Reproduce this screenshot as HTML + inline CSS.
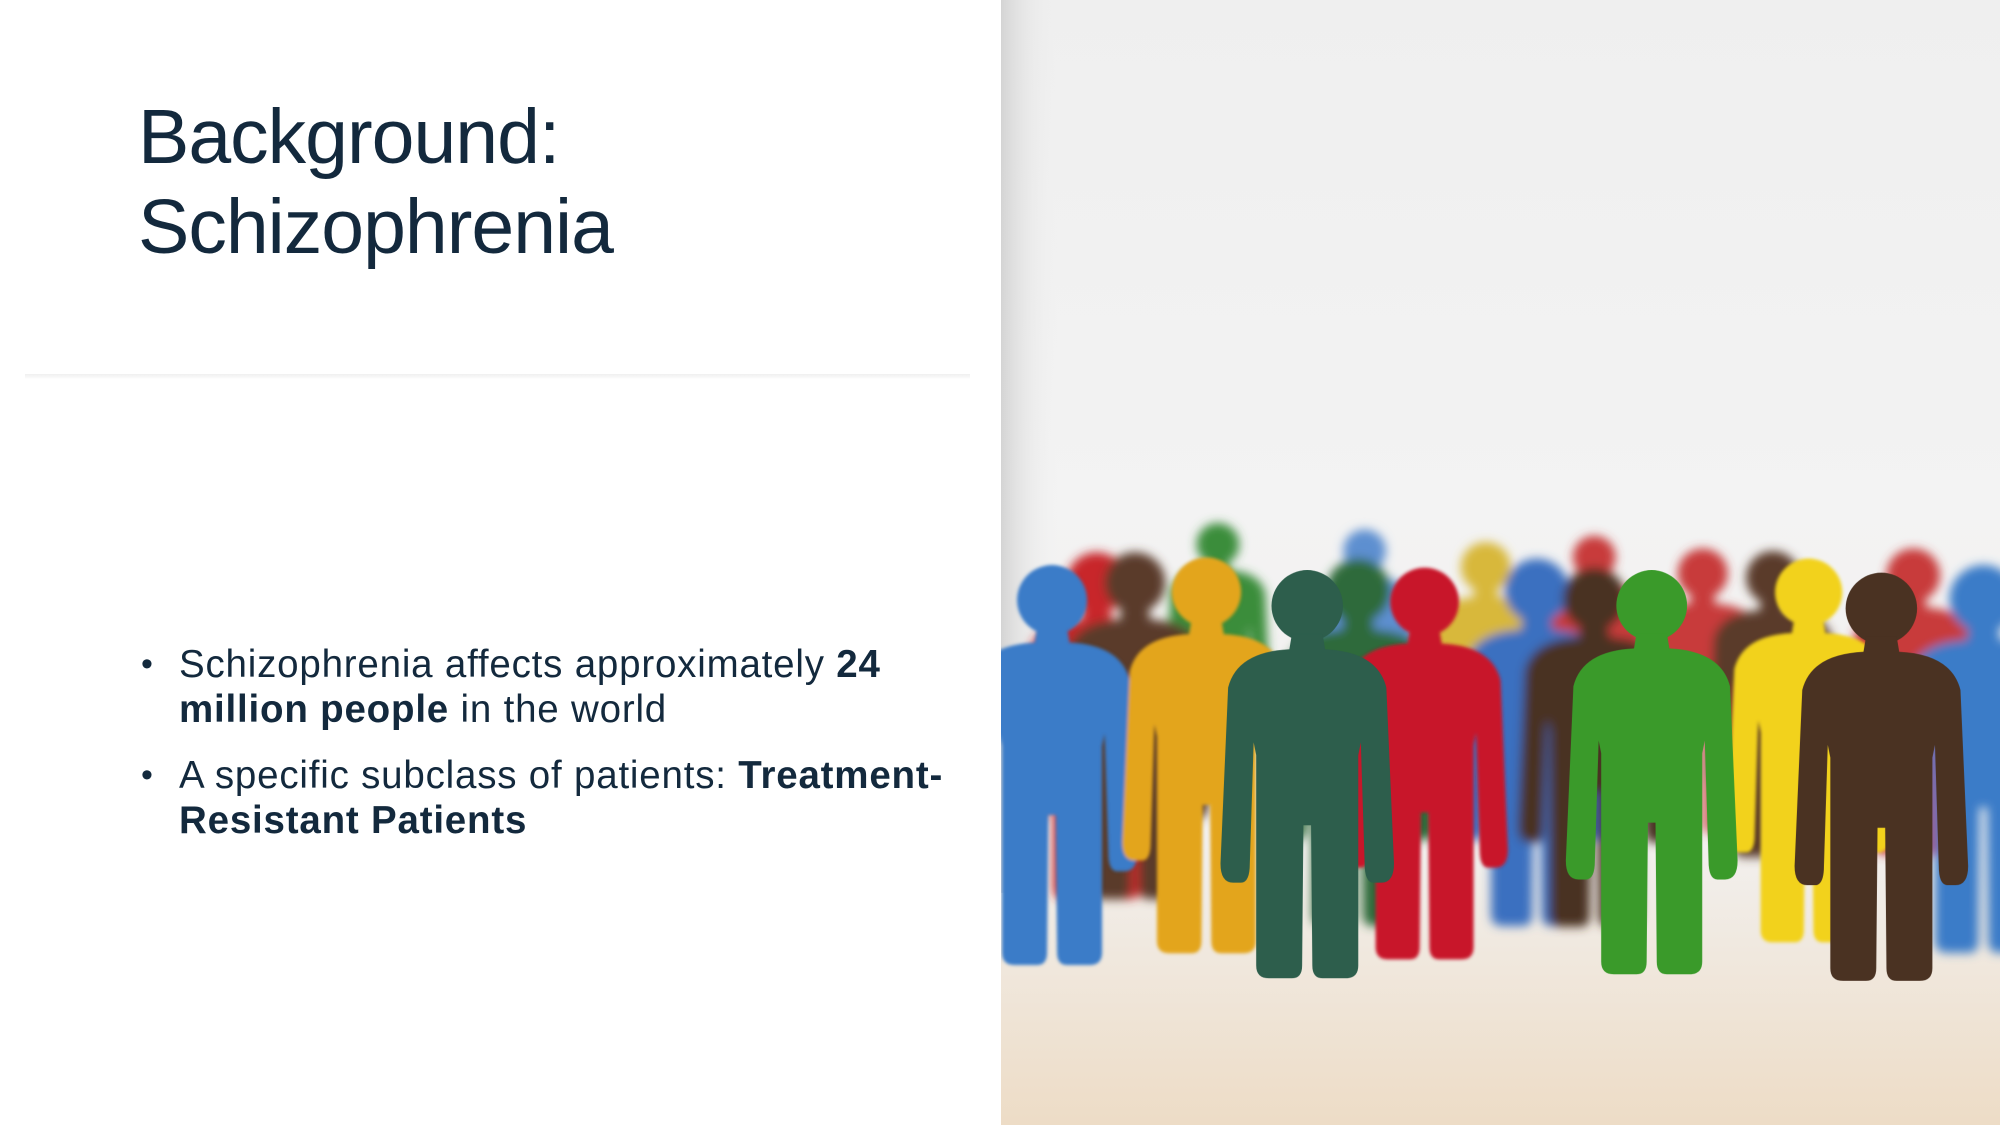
<!DOCTYPE html>
<html><head><meta charset="utf-8"><style>
html,body{margin:0;padding:0;}
body{width:2000px;height:1125px;position:relative;overflow:hidden;background:#fff;font-family:"Liberation Sans",sans-serif;color:#13293d;}
.title{position:absolute;left:138px;top:92px;font-size:77px;line-height:90px;letter-spacing:-1px;}
.rule{position:absolute;left:25px;top:374px;width:945px;height:5px;background:linear-gradient(to bottom,#f0f0f0,#f7f7f7 60%,#fff);}
.list{position:absolute;left:179px;top:642px;width:800px;font-size:38.5px;line-height:45px;letter-spacing:0.8px;}
.list div{position:relative;margin-bottom:21px;}
.list div:before{content:"•";position:absolute;left:-38px;top:0;font-size:34px;}
b{font-weight:bold;}
svg{position:absolute;left:1001px;top:0;}
</style></head><body>
<div class="title">Background:<br>Schizophrenia</div>
<div class="rule"></div>
<div class="list">
<div>Schizophrenia affects approximately <b>24 million people</b> in the world</div>
<div>A specific subclass of patients: <b>Treatment-Resistant Patients</b></div>
</div>
<svg width="999" height="1125" viewBox="785 0 783 882" preserveAspectRatio="none">
<defs>
<linearGradient id="bg" x1="0" y1="0" x2="0" y2="1">
<stop offset="0" stop-color="#efefef"/><stop offset="0.45" stop-color="#f3f3f3"/><stop offset="0.75" stop-color="#f2f0ee"/><stop offset="1" stop-color="#eddcc6"/></linearGradient>
<linearGradient id="edge" x1="0" y1="0" x2="1" y2="0">
<stop offset="0" stop-color="#d4d4d4"/><stop offset="0.5" stop-color="#e4e4e4" stop-opacity="0.5"/><stop offset="1" stop-color="#f0f0f0" stop-opacity="0"/></linearGradient>
<filter id="bl" x="-30%" y="-30%" width="160%" height="160%"><feGaussianBlur stdDeviation="4"/></filter>
<filter id="bl2" x="-30%" y="-30%" width="160%" height="160%"><feGaussianBlur stdDeviation="1.2"/></filter>
<g id="p">
<circle cx="0" cy="28" r="28"/>
<path d="M-12 50 L12 50 L14 62 Q55 64 62 92 L68 230 Q68 245 58 245 L52 245 Q45 245 45 230 L42 135 L40 145 L40 310 Q40 320 30 320 L12 320 Q4 320 4 310 L3 200 L-3 200 L-4 310 Q-4 320-12 320 L-30 320 Q-40 320-40 310 L-40 145 L-42 135 L-45 230 Q-45 245-52 245 L-58 245 Q-68 245-68 230 L-62 92 Q-55 64-14 62 Z"/>
</g>
</defs>
<rect x="785" y="0" width="783" height="882" fill="url(#bg)"/>
<rect x="785" y="0" width="45" height="700" fill="url(#edge)"/>
<g filter="url(#bl)">
<g fill="#3b8d3a" transform="translate(955,410) scale(0.6)"><use href="#p"/></g>
<g fill="#5d8fd0" transform="translate(1070,415) scale(0.6)"><use href="#p"/></g>
<g fill="#d8b83a" transform="translate(1165,425) scale(0.7)"><use href="#p"/></g>
<g fill="#c83a3a" transform="translate(1250,420) scale(0.6)"><use href="#p"/></g>
<g fill="#c83a3a" transform="translate(1335,430) scale(0.7)"><use href="#p"/></g>
<g fill="#5a3a2a" transform="translate(1390,432) scale(0.75)"><use href="#p"/></g>
<g fill="#c83a3a" transform="translate(1500,430) scale(0.75)"><use href="#p"/></g>
<g fill="#c8282a" transform="translate(860,433) scale(0.85)"><use href="#p"/></g>
<g fill="#5a3a2a" transform="translate(890,433) scale(0.85)"><use href="#p"/></g>
<g fill="#2f6b3a" transform="translate(1065,438) scale(0.9)"><use href="#p"/></g>
<g fill="#3a6fc0" transform="translate(1205,438) scale(0.9)"><use href="#p"/></g>
<g fill="#4a3222" transform="translate(1250,445) scale(0.88)"><use href="#p"/></g>
<g fill="#3a7cc8" transform="translate(1555,443) scale(0.95)"><use href="#p"/></g>
</g>
<g filter="url(#bl2)">
<g fill="#3a7cc8" transform="translate(825,443) scale(0.98)"><use href="#p"/></g>
<g fill="#e3a51c" transform="translate(946,437) scale(0.97)"><use href="#p"/></g>
<g fill="#c8182a" transform="translate(1117,445) scale(0.96)"><use href="#p"/></g>
<g fill="#f2d21c" transform="translate(1418,438) scale(0.94)"><use href="#p"/></g>
</g>
<g fill="#2d5e4c" transform="translate(1025,447)"><use href="#p"/></g>
<g fill="#3a9a2a" transform="translate(1295,447) scale(0.99)"><use href="#p"/></g>
<g fill="#4a3222" transform="translate(1475,449)"><use href="#p"/></g>
</svg>
</body></html>
